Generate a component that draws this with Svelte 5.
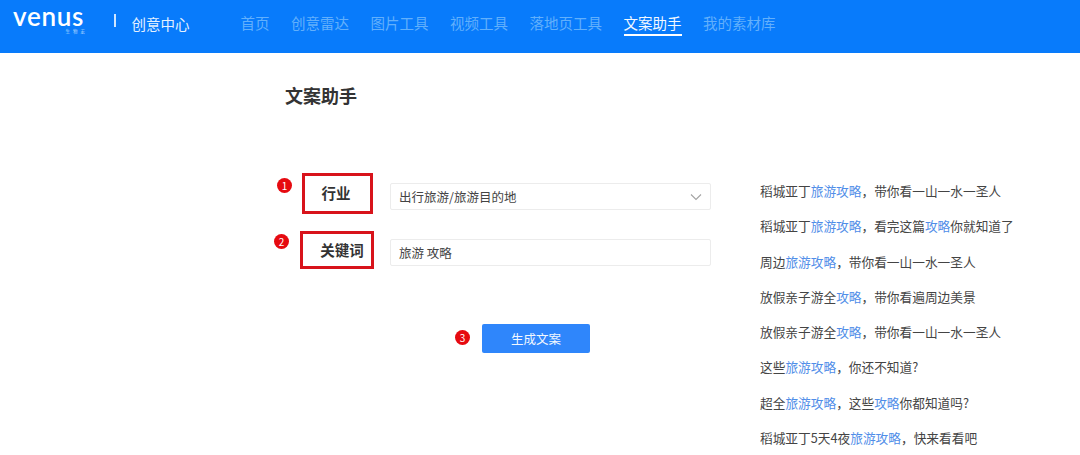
<script>
  const navItems = ['首页', '创意雷达', '图片工具', '视频工具', '落地页工具', '文案助手', '我的素材库'];
  const activeNav = '文案助手';

  // each line is split into plain / highlighted parts
  const k = (text) => ({ text, hl: true });
  const lines = [
    ['稻城亚丁', k('旅游攻略'), '，带你看一山一水一圣人'],
    ['稻城亚丁', k('旅游攻略'), '，看完这篇', k('攻略'), '你就知道了'],
    ['周边', k('旅游攻略'), '，带你看一山一水一圣人'],
    ['放假亲子游全', k('攻略'), '，带你看遍周边美景'],
    ['放假亲子游全', k('攻略'), '，带你看一山一水一圣人'],
    ['这些', k('旅游攻略'), '，你还不知道?'],
    ['超全', k('旅游攻略'), '，这些', k('攻略'), '你都知道吗?'],
    ['稻城亚丁5天4夜', k('旅游攻略'), '，快来看看吧']
  ];
</script>

<header class="topbar">
  <div class="logo">
    <span class="logo-word">venus</span>
    <span class="logo-sub">生物宏</span>
  </div>
  <span class="divider"></span>
  <span class="brand">创意中心</span>
  <nav class="nav">
    {#each navItems as item}
      <span class="nav-item" class:active={item === activeNav}>{item}</span>
    {/each}
  </nav>
</header>

<main class="page">
  <h1 class="title">文案助手</h1>
  <div class="content">
    <div class="form">
      <div class="row row-first">
        <div class="label-box first">
          <span class="badge">1</span>
          行业
        </div>
        <div class="field select">
          <span>出行旅游/旅游目的地</span>
          <svg class="chevron" width="12" height="8" viewBox="0 0 12 8">
            <path d="M1 1.5 L6 6.5 L11 1.5" fill="none" stroke="#a3a3a3" stroke-width="1.1" />
          </svg>
        </div>
      </div>
      <div class="row row-second">
        <div class="label-box second">
          <span class="badge">2</span>
          关键词
        </div>
        <div class="field">旅游 攻略</div>
      </div>
      <div class="actions">
        <span class="badge static">3</span>
        <button class="submit">生成文案</button>
      </div>
    </div>
    <ul class="results">
      {#each lines as line}
        <li>
          {#each line as part}
            {#if typeof part === 'string'}{part}{:else}<em>{part.text}</em>{/if}
          {/each}
        </li>
      {/each}
    </ul>
  </div>
</main>

<style>
  :global(body) {
    background: #fff;
    font-family: "Noto Sans CJK SC", "Liberation Sans", sans-serif;
    overflow: hidden;
  }

  .topbar {
    height: 53px;
    background: #087bfb;
    display: flex;
    align-items: center;
    padding-left: 13px;
    box-sizing: border-box;
  }

  .logo {
    width: 73px;
    display: flex;
    flex-direction: column;
    align-items: flex-end;
    margin-top: -12px;
  }

  .logo-word {
    font-family: "Lato", sans-serif;
    font-size: 26px;
    font-weight: 600;
    line-height: 17px;
    letter-spacing: 0.7px;
    color: #fff;
    width: 73px;
    white-space: nowrap;
  }

  .logo-sub {
    margin-top: 3px;
    font-size: 4.5px;
    line-height: 6px;
    letter-spacing: 3px;
    margin-right: -2px;
    color: #b9dcff;
  }

  .divider {
    width: 1.5px;
    height: 13px;
    background: #cfe6ff;
    margin: -13px 0 0 28px;
  }

  .brand {
    margin-left: 16px;
    font-size: 14.5px;
    color: #e4f1ff;
    margin-top: -7px;
  }

  .nav {
    display: flex;
    gap: 21.5px;
    margin-left: 51px;
    margin-top: -6px;
  }

  .nav-item {
    font-size: 14.5px;
    line-height: 22px;
    color: #62b0fc;
    border-bottom: 2px solid transparent;
  }

  .nav-item.active {
    color: #f2f8ff;
    border-bottom-color: #fff;
  }

  .page {
    padding-left: 285px;
  }

  .title {
    margin: 0;
    padding-top: 28px;
    font-size: 18px;
    line-height: 28px;
    font-weight: 700;
    color: #333;
  }

  .content {
    display: flex;
    margin-top: 64px;
  }

  .form {
    width: 426px;
    margin-right: 49px;
  }

  .row {
    display: flex;
    align-items: center;
  }

  .row-first .field {
    margin-top: 6px;
  }

  .row-second {
    margin-top: 17px;
  }

  .row-second .field {
    margin-top: 4px;
  }

  .label-box {
    position: relative;
    box-sizing: border-box;
    border: 3px solid #d8131b;
    display: flex;
    align-items: center;
    justify-content: center;
    font-size: 14.5px;
    font-weight: 700;
    color: #333;
  }

  .label-box.first {
    width: 71px;
    height: 41px;
    margin: 0 17px 0 17px;
    padding: 0 3px 2px 0;
  }

  .label-box.second {
    width: 74px;
    height: 38px;
    margin: 0 16px 0 15px;
    padding: 0 0 2px 10px;
  }

  .field {
    box-sizing: border-box;
    width: 321px;
    height: 27px;
    border: 1px solid #ececec;
    border-radius: 2px;
    padding-left: 8px;
    display: flex;
    align-items: center;
    font-size: 12.5px;
    color: #444;
  }

  .select {
    justify-content: space-between;
    padding-right: 8px;
  }

  .badge {
    position: absolute;
    width: 15px;
    height: 15px;
    border-radius: 50%;
    background: #e60a10;
    color: #fff;
    font-size: 10px;
    font-weight: 400;
    line-height: 15px;
    text-align: center;
  }

  .first .badge {
    left: -28px;
    top: 2px;
  }

  .second .badge {
    left: -29px;
    top: 0;
  }

  .actions {
    display: flex;
    align-items: center;
    justify-content: flex-start;
    margin-top: 55px;
    padding-left: 170px;
    gap: 12px;
  }

  .badge.static {
    position: static;
    margin-bottom: 3px;
  }

  .submit {
    width: 108px;
    height: 29px;
    border: 0;
    border-radius: 2px;
    background: #2f86fb;
    color: #f2f8ff;
    font-family: inherit;
    font-size: 12.5px;
    padding: 0;
  }

  .results {
    list-style: none;
    margin: 0;
    padding: 0;
    font-size: 12.7px;
    line-height: 35.3px;
    color: #444;
    white-space: nowrap;
  }

  .results em {
    font-style: normal;
    color: #4f8de8;
  }
</style>
